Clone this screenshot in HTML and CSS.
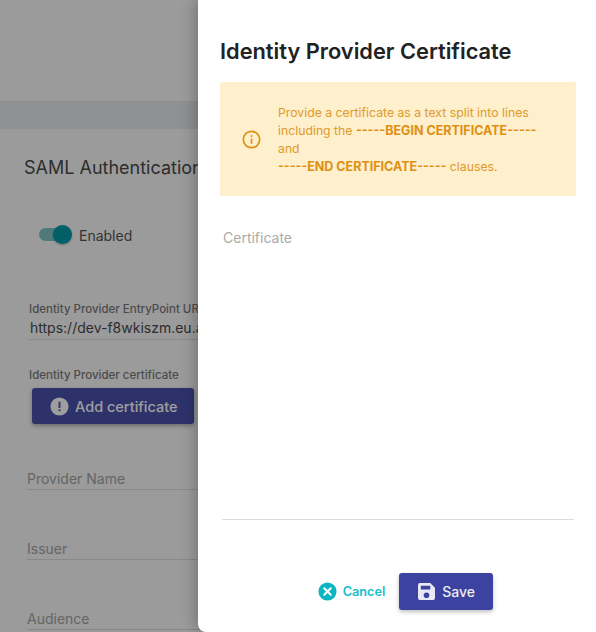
FILE: index.html
```html
<!DOCTYPE html>
<html lang="en">
<head>
<meta charset="utf-8">
<title>SAML Authentication</title>
<link rel="stylesheet" href="styles.css">
</head>
<body>
<div class="page">
  <div class="band"></div>
  <main class="settings">
    <h2 class="settings-title">SAML Authentication</h2>
    <div class="toggle-row">
      <span class="toggle"><span class="toggle-track"></span><span class="toggle-thumb"></span></span>
      <span class="toggle-label">Enabled</span>
    </div>
    <div class="url-field">
      <div class="small-label">Identity Provider EntryPoint URL</div>
      <div class="url-value">https://dev-f8wkiszm.eu.auth0.com</div>
    </div>
    <div class="small-label cert-label">Identity Provider certificate</div>
    <button class="add-btn" type="button">
      <svg class="add-icon" viewBox="0 0 20 20"><circle cx="10" cy="10" r="9.5" fill="#fff"/><rect x="9" y="5" width="2" height="6.5" fill="#4a51ad"/><rect x="9" y="13" width="2" height="2" fill="#4a51ad"/></svg>
      <span>Add certificate</span>
    </button>
    <div class="plain-field first">Provider Name</div>
    <div class="plain-field">Issuer</div>
    <div class="plain-field">Audience</div>
  </main>
  <div class="scrim"></div>
  <aside class="drawer">
    <h1 class="drawer-title">Identity Provider Certificate</h1>
    <div class="notice">
      <svg class="notice-icon" viewBox="0 0 20 20" fill="none" stroke="#e09213" stroke-width="1.8"><circle cx="10" cy="10" r="8.6"/><path d="M10 9v5.4"/><path d="M10 5.4v1.9"/></svg>
      <p class="notice-text">Provide a certificate as a text split into lines including the <b>-----BEGIN CERTIFICATE-----</b> and<br><b>-----END CERTIFICATE-----</b> clauses.</p>
    </div>
    <div class="cert-area">Certificate</div>
    <div class="actions">
      <button class="cancel-btn" type="button">
        <svg class="cancel-icon" viewBox="0 0 20 20"><circle cx="10" cy="10" r="9.5" fill="#0bb5c2"/><path d="M6.6 6.6l6.8 6.8M13.4 6.6l-6.8 6.8" stroke="#fff" stroke-width="2.2" stroke-linecap="round"/></svg>
        <span>Cancel</span>
      </button>
      <button class="save-btn" type="button">
        <svg class="save-icon" viewBox="0 0 18 18"><path fill="#e8e9f5" fill-rule="evenodd" d="M2 0h11l5 5v11a2 2 0 0 1-2 2H2a2 2 0 0 1-2-2V2a2 2 0 0 1 2-2zm1 3v4h10V3zm6 7a3 3 0 1 0 0 6 3 3 0 0 0 0-6z"/></svg>
        <span>Save</span>
      </button>
    </div>
  </aside>
</div>
</body>
</html>
```
FILE: styles.css
```css
* { box-sizing: border-box; }
html, body { margin: 0; padding: 0; height: 100%; }
body { font-family: Inter, "Liberation Sans", sans-serif; overflow: hidden; }
button { font-family: inherit; border: 0; cursor: pointer; }
h1, h2, p { margin: 0; }

.page { position: relative; width: 596px; height: 632px; overflow: hidden; background: #fafafa; }
.band { height: 28px; margin-top: 101px; background: #e6e9ec; }
.settings { padding: 28px 0 0 24px; width: 260px; }
.settings-title { font-size: 18px; font-weight: 400; line-height: 22px; color: #4a4a4a; white-space: nowrap; }
.toggle-row { display: flex; align-items: center; gap: 7px; margin: 45px 0 0 15px; height: 22px; }
.toggle { position: relative; display: block; width: 33px; height: 22px; }
.toggle-track { position: absolute; left: 0; top: 4px; width: 30px; height: 13px; border-radius: 7px; background: #80c5c9; }
.toggle-thumb { position: absolute; left: 14px; top: 1px; width: 19px; height: 19px; border-radius: 50%; background: #009aa6; box-shadow: 0 1px 2px rgba(0,0,0,.3); }
.toggle-label { font-size: 14px; color: #555; }
.url-field { margin: 56px 0 0 5px; width: 230px; padding-bottom: 2px; border-bottom: 1px solid #dcdcdc; white-space: nowrap; }
.small-label { font-size: 11.5px; line-height: 14px; font-weight: 500; color: #7a7a7a; white-space: nowrap; }
.url-value { font-size: 14px; line-height: 19px; color: #4a4a4a; margin: 2px 0 0 1px; }
.cert-label { margin: 28px 0 0 5px; }
.add-btn { display: flex; align-items: center; gap: 6px; width: 162px; height: 36px; margin: 6px 0 0 8px; padding: 0 0 0 18px; border-radius: 3px; background: #4a51ad; color: #fff; font-size: 14.5px; font-weight: 500; box-shadow: 0 2px 4px rgba(0,0,0,.3); white-space: nowrap; }
.add-icon { width: 19px; height: 19px; flex: none; }
.plain-field { width: 230px; height: 21px; margin: 49px 0 0 3px; font-size: 14px; line-height: 20px; color: #a3a3a3; border-bottom: 1px solid #dcdcdc; }
.plain-field.first { margin-top: 45px; }

.scrim { position: absolute; inset: 0; background: rgba(0,0,0,.38); }

.drawer { position: absolute; top: 0; right: 0; bottom: 0; width: 398px; padding: 38px 20px 0 22px; background: #fff; border-bottom-left-radius: 8px; box-shadow: -4px 0 14px rgba(0,0,0,.22); display: flex; flex-direction: column; }
.drawer-title { font-size: 21.8px; line-height: 26px; font-weight: 600; color: #222; white-space: nowrap; }
.notice { display: flex; align-items: center; height: 114px; margin-top: 18px; padding: 1px 30px 0 22px; border-radius: 2px; background: #feefcd; }
.notice-icon { width: 19px; height: 19px; flex: none; margin-right: 17px; }
.notice-text { font-size: 12.25px; line-height: 18px; color: #e09a2a; }
.notice-text b { font-size: 12.5px; font-weight: 700; color: #df9012; }
.cert-area { height: 292px; margin: 32px 2px 0 2px; padding: 0 0 0 1px; font-size: 14px; line-height: 20px; color: #aaa; border-bottom: 1px solid #dcdcdc; }
.actions { display: flex; justify-content: center; align-items: center; gap: 14px; margin-top: 53px; padding-left: 15px; }
.cancel-btn { display: flex; align-items: center; gap: 6px; padding: 0; background: none; color: #17c0cc; font-size: 12.7px; font-weight: 600; }
.cancel-icon { width: 19px; height: 19px; }
.save-btn { display: flex; align-items: center; gap: 7px; width: 94px; height: 37px; padding: 0 0 0 19px; border-radius: 3px; background: #3b429f; color: #eee; font-size: 14px; font-weight: 500; box-shadow: 0 2px 4px rgba(0,0,0,.25); }
.save-icon { width: 17px; height: 17px; flex: none; }
```
